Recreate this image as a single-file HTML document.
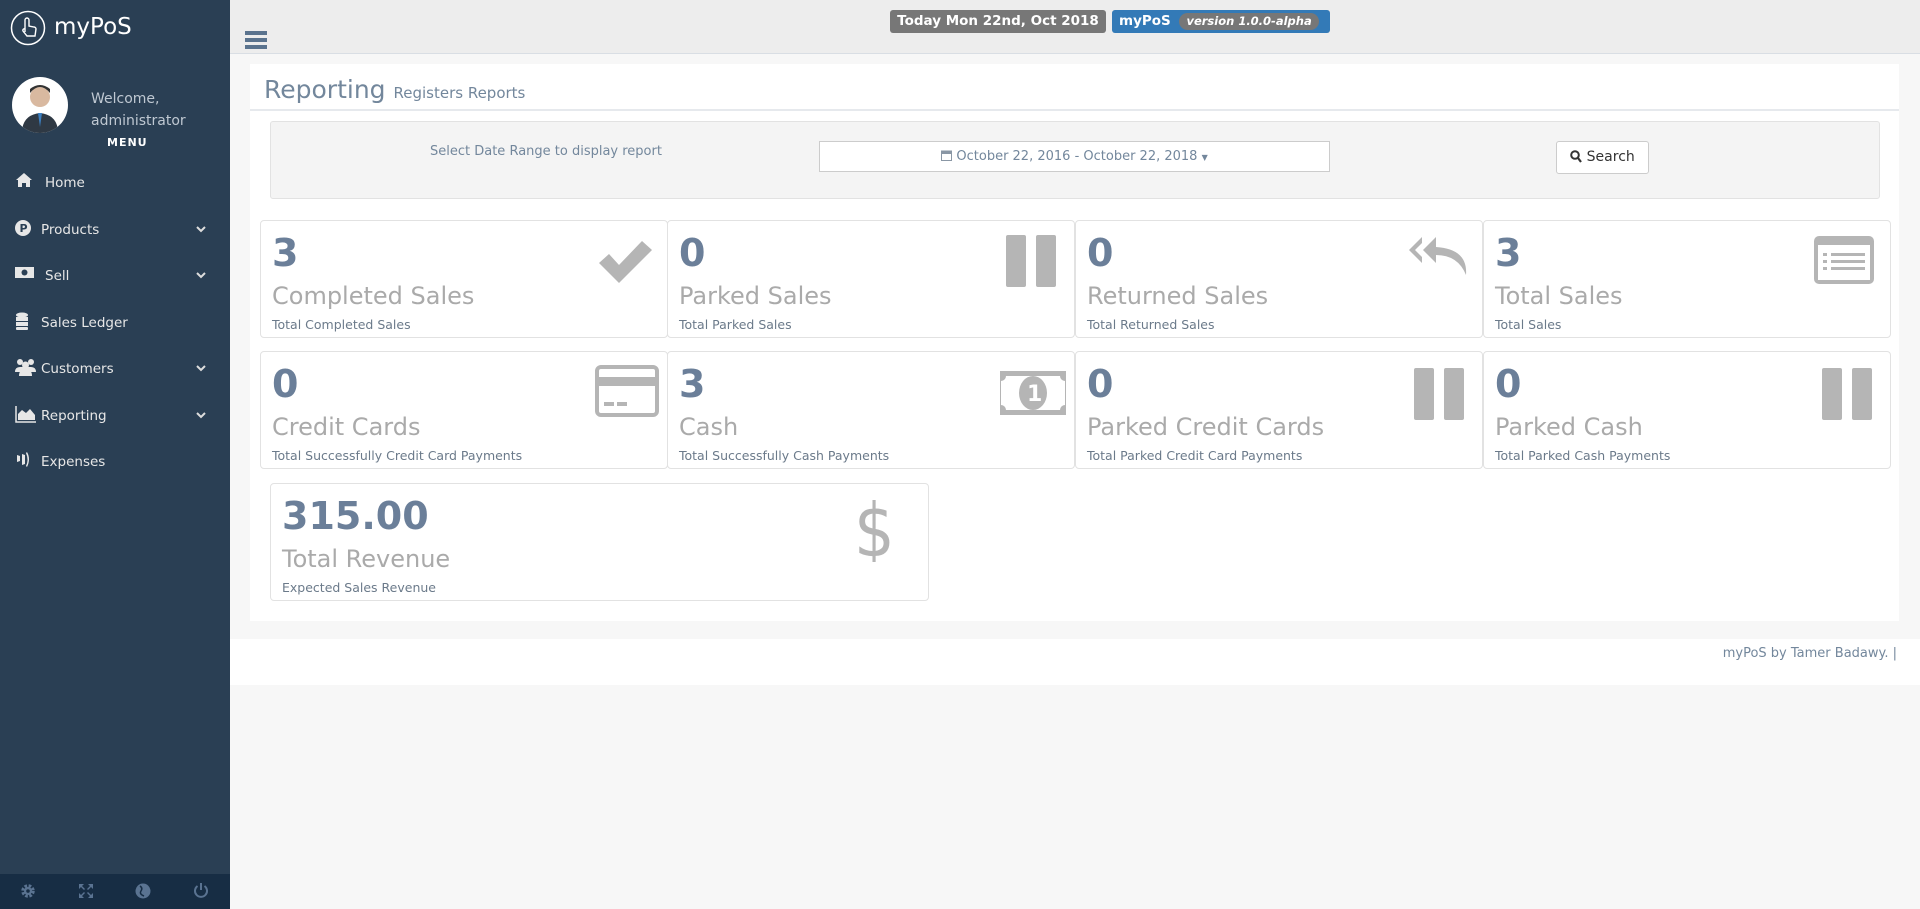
<!DOCTYPE html>
<html><head><meta charset="utf-8"><style>
*{box-sizing:border-box;margin:0;padding:0}
body{width:1920px;height:909px;background:#f7f7f7;font-family:"DejaVu Sans","Liberation Sans",sans-serif;position:relative;overflow:hidden}
.a{position:absolute}
#side{left:0;top:0;width:230px;height:909px;background:#2a3f54}
#sbot{left:0;top:874px;width:230px;height:35px;background:#172d44}
.nav{position:absolute;left:0;width:230px;color:#e7e7e7;font-size:13.5px}
.nav svg{position:absolute;left:15px;top:-3px}
.nav .t{position:absolute;left:41px;top:0}
.nav svg.c{left:196px;top:4px}
.card{position:absolute;background:#fff;border:1px solid #e2e2e2;border-radius:4px;width:408px;height:118px}
.card .n{position:absolute;left:11px;top:10px;font-size:38px;font-weight:bold;color:#6b7f99}
.card .l{position:absolute;left:11px;top:61px;font-size:24px;color:#aaa}
.card .s{position:absolute;left:11px;top:96px;font-size:12.5px;color:#6b7a8a}
.card svg{position:absolute;right:16px;top:14px}
</style></head><body>
<div class="a" id="side"></div>
<div class="a" id="sbot"></div>
<svg class="a" style="left:10px;top:10px" width="36" height="36" viewBox="0 0 36 36"><circle cx="18" cy="18" r="16.5" fill="none" stroke="#fff" stroke-width="1.5"/><path d="M15 22V10a2 2 0 014 0v6l5 1a2 2 0 012 2l-1 7h-8l-4-5a1.5 1.5 0 012-2z" fill="none" stroke="#fff" stroke-width="1.4"/></svg>
<div class="a" style="left:54px;top:14px;color:#fff;font-size:23px">myPoS</div>
<div class="a" style="left:12px;top:77px;width:56px;height:56px;border-radius:50%;background:#fff;overflow:hidden"><svg width="56" height="56" viewBox="0 0 56 56"><circle cx="28" cy="20" r="10" fill="#d9b9a0"/><path d="M18 16q10-12 20 0v-4q-10-8-20 0z" fill="#333"/><path d="M10 56q0-18 18-20q18 2 18 20z" fill="#2f3944"/><path d="M26 36l2 14 2-14z" fill="#3b7ec0"/></svg></div>
<div class="a" style="left:91px;top:88px;color:#bfc8d2;font-size:14px;line-height:22px">Welcome,<br>administrator</div>
<div class="a" style="left:107px;top:136px;color:#fff;font-size:11px;font-weight:bold;letter-spacing:1px">MENU</div>
<div class="nav" style="top:175px"><svg width="18" height="16" viewBox="0 0 18 16"><path d="M9 1L1 8h2v7h4v-4h4v4h4V8h2z" fill="#e7e7e7"/></svg><span class="t" style="left:45px">Home</span></div>
<div class="nav" style="top:222px"><svg width="18" height="18"><circle cx="8" cy="9" r="8" fill="#e7e7e7"/><text x="4.5" y="13" font-size="11" font-weight="bold" fill="#2a3f54">P</text></svg><span class="t">Products</span><svg class="c" width="10" height="8"><path d="M1 1l4 4 4-4" fill="none" stroke="#ddd" stroke-width="2"/></svg></div>
<div class="nav" style="top:268px"><svg width="20" height="16"><rect x="0" y="2" width="19" height="11" fill="#e7e7e7"/><circle cx="9.5" cy="7.5" r="3" fill="#2a3f54"/></svg><span class="t" style="left:45px">Sell</span><svg class="c" width="10" height="8"><path d="M1 1l4 4 4-4" fill="none" stroke="#ddd" stroke-width="2"/></svg></div>
<div class="nav" style="top:315px"><svg width="16" height="18"><ellipse cx="7" cy="3" rx="6" ry="2.5" fill="#e7e7e7"/><rect x="1" y="5" width="12" height="4" fill="#e7e7e7"/><rect x="1" y="10" width="12" height="4" fill="#e7e7e7"/><rect x="1" y="15" width="12" height="3" rx="1" fill="#e7e7e7"/></svg><span class="t">Sales Ledger</span></div>
<div class="nav" style="top:361px"><svg width="22" height="18"><circle cx="5" cy="4" r="3" fill="#e7e7e7"/><circle cx="16" cy="4" r="3" fill="#e7e7e7"/><circle cx="10.5" cy="7" r="3.5" fill="#e7e7e7"/><path d="M0 14q0-5 5-5h11q5 0 5 5zM4 18q0-7 6.5-7t6.5 7z" fill="#e7e7e7"/></svg><span class="t">Customers</span><svg class="c" width="10" height="8"><path d="M1 1l4 4 4-4" fill="none" stroke="#ddd" stroke-width="2"/></svg></div>
<div class="nav" style="top:408px"><svg width="22" height="18"><path d="M1 1v16h20" fill="none" stroke="#e7e7e7" stroke-width="1.5"/><path d="M3 15V9l4-4 4 3 4-4 5 6v5z" fill="#e7e7e7"/></svg><span class="t">Reporting</span><svg class="c" width="10" height="8"><path d="M1 1l4 4 4-4" fill="none" stroke="#ddd" stroke-width="2"/></svg></div>
<div class="nav" style="top:454px"><svg width="18" height="18"><path d="M2 4l3 1v5l-3 1zM7 3l3 1v9l-3 1zM12 1q4 7 0 15l-1-1q3-6 0-13z" fill="#e7e7e7"/></svg><span class="t">Expenses</span></div>
<svg class="a" style="left:20px;top:883px" width="16" height="16" viewBox="0 0 16 16"><circle cx="8" cy="8" r="5" fill="none" stroke="#5a7391" stroke-width="3.5" stroke-dasharray="2.5 1.5"/><circle cx="8" cy="8" r="4" fill="#5a7391"/><circle cx="8" cy="8" r="1.8" fill="#172d44"/></svg>
<svg class="a" style="left:78px;top:883px" width="16" height="16" viewBox="0 0 16 16" fill="#5a7391"><path d="M1 1h5L4 3l3 3-1 1-3-3-2 2zM15 1v5l-2-2-3 3-1-1 3-3-2-2zM1 15v-5l2 2 3-3 1 1-3 3 2 2zM15 15h-5l2-2-3-3 1-1 3 3 2-2z"/></svg>
<svg class="a" style="left:135px;top:883px" width="16" height="16"><circle cx="8" cy="8" r="7.5" fill="#5a7391"/><path d="M5 3q3 2 1 5t3 5" fill="none" stroke="#172d44" stroke-width="1.5"/></svg>
<svg class="a" style="left:193px;top:882px" width="16" height="17"><path d="M4.5 4a6 6 0 107 0" fill="none" stroke="#5a7391" stroke-width="2"/><path d="M8 1v7" stroke="#5a7391" stroke-width="2"/></svg>

<div class="a" style="left:230px;top:0;width:1690px;height:54px;background:#ededed;border-bottom:1px solid #d9dee4"></div>
<div class="a" style="left:245px;top:31px;width:22px;height:4px;background:#5a738e;box-shadow:0 7px 0 #5a738e,0 14px 0 #5a738e"></div>
<div class="a" style="left:890px;top:10px;width:216px;height:23px;background:#777;border-radius:3px;color:#fff;font-weight:bold;font-size:13.5px;text-align:center;line-height:23px">Today Mon 22nd, Oct 2018</div>
<div class="a" style="left:1112px;top:10px;width:218px;height:23px;background:#337ab7;border-radius:3px;color:#fff;font-weight:bold;font-size:13.5px;line-height:23px;padding-left:7px">myPoS <span style="display:inline-block;background:#777;border-radius:9px;font-style:italic;font-size:11.5px;padding:0 7px;line-height:17px;margin-left:4px">version 1.0.0-alpha</span></div>

<div class="a" style="left:250px;top:64px;width:1649px;height:557px;background:#fff"></div>
<div class="a" style="left:264px;top:75px;color:#73879c;font-size:25px">Reporting <span style="font-size:15px">Registers Reports</span></div>
<div class="a" style="left:250px;top:109px;width:1649px;height:2px;background:#e6e9ed"></div>
<div class="a" style="left:270px;top:121px;width:1610px;height:78px;background:#f4f4f4;border:1px solid #e2e2e2;border-radius:3px"></div>
<div class="a" style="left:430px;top:144px;color:#73879c;font-size:13px">Select Date Range to display report</div>
<div class="a" style="left:819px;top:141px;width:511px;height:31px;background:#fff;border:1px solid #ccc;color:#73879c;font-size:13px;text-align:center;line-height:29px"><svg width="11" height="12" style="vertical-align:-1px"><rect x="0.5" y="2" width="10" height="9.5" fill="none" stroke="#8a97a5"/><rect x="0.5" y="2" width="10" height="3" fill="#8a97a5"/></svg> October 22, 2016 - October 22, 2018 <span style="font-size:8px">&#9660;</span></div>
<div class="a" style="left:1556px;top:141px;width:93px;height:33px;background:#fff;border:1px solid #ccc;border-radius:3px;color:#333;font-size:14px;text-align:center;line-height:31px"><svg width="12" height="13" style="vertical-align:-2px"><circle cx="5" cy="5" r="3.8" fill="none" stroke="#333" stroke-width="2"/><path d="M8 8l3 4" stroke="#333" stroke-width="2.2"/></svg> Search</div>

<div class="card" style="left:260px;top:220px"><div class="n">3</div><div class="l">Completed Sales</div><div class="s">Total Completed Sales</div><svg width="56" height="50" style="top:16px;right:14px"><path d="M2 26l10-9 10 11L45 4l10 9-33 33z" fill="#b5b5b5"/></svg></div>
<div class="card" style="left:667px;top:220px"><div class="n">0</div><div class="l">Parked Sales</div><div class="s">Total Parked Sales</div><svg width="52" height="52"><rect x="0" y="0" width="20" height="52" rx="2" fill="#b5b5b5"/><rect x="30" y="0" width="20" height="52" rx="2" fill="#b5b5b5"/></svg></div>
<div class="card" style="left:1075px;top:220px"><div class="n">0</div><div class="l">Returned Sales</div><div class="s">Total Returned Sales</div><svg width="62" height="56" style="top:12px;right:12px"><path d="M14 4L1 17l13 13v-6L7 17l7-7zM28 4L15 17l13 13v-8q22 0 30 20 2-26-30-28z" fill="#b5b5b5"/></svg></div>
<div class="card" style="left:1483px;top:220px"><div class="n">3</div><div class="l">Total Sales</div><div class="s">Total Sales</div><svg width="60" height="48" style="top:15px"><rect x="0" y="0" width="60" height="48" rx="5" fill="#b5b5b5"/><rect x="4" y="9" width="52" height="35" fill="#fff"/><g fill="#b5b5b5"><rect x="9" y="17" width="4" height="3"/><rect x="9" y="24" width="4" height="3"/><rect x="9" y="31" width="4" height="3"/><rect x="17" y="17" width="34" height="3"/><rect x="17" y="24" width="34" height="3"/><rect x="17" y="31" width="34" height="3"/></g></svg></div>

<div class="card" style="left:260px;top:351px"><div class="n">0</div><div class="l">Credit Cards</div><div class="s">Total Successfully Credit Card Payments</div><svg width="64" height="54" style="top:13px;right:8px"><rect x="2" y="2" width="60" height="48" rx="4" fill="none" stroke="#b5b5b5" stroke-width="4"/><rect x="2" y="12" width="60" height="9" fill="#b5b5b5"/><rect x="9" y="37" width="10" height="4" fill="#b5b5b5"/><rect x="22" y="37" width="10" height="4" fill="#b5b5b5"/></svg></div>
<div class="card" style="left:667px;top:351px"><div class="n">3</div><div class="l">Cash</div><div class="s">Total Successfully Cash Payments</div><svg width="66" height="44" style="top:19px;right:8px"><rect x="0" y="0" width="66" height="44" fill="#b5b5b5"/><path d="M6 5h54a5 5 0 005 5v24a5 5 0 00-5 5H6a5 5 0 00-5-5V10a5 5 0 005-5z" fill="#fff"/><ellipse cx="33" cy="22" rx="14" ry="17" fill="#b5b5b5"/><text x="27" y="30" font-size="22" font-weight="bold" fill="#fff" font-family="DejaVu Sans">1</text></svg></div>
<div class="card" style="left:1075px;top:351px"><div class="n">0</div><div class="l">Parked Credit Cards</div><div class="s">Total Parked Credit Card Payments</div><svg width="52" height="52" style="top:16px"><rect x="0" y="0" width="20" height="52" rx="2" fill="#b5b5b5"/><rect x="30" y="0" width="20" height="52" rx="2" fill="#b5b5b5"/></svg></div>
<div class="card" style="left:1483px;top:351px"><div class="n">0</div><div class="l">Parked Cash</div><div class="s">Total Parked Cash Payments</div><svg width="52" height="52" style="top:16px"><rect x="0" y="0" width="20" height="52" rx="2" fill="#b5b5b5"/><rect x="30" y="0" width="20" height="52" rx="2" fill="#b5b5b5"/></svg></div>

<div class="card" style="left:270px;top:483px;width:659px"><div class="n">315.00</div><div class="l">Total Revenue</div><div class="s">Expected Sales Revenue</div><svg width="40" height="70" style="top:8px;right:36px"><text x="2" y="56" font-size="64" fill="#b5b5b5" font-family="DejaVu Sans" transform="scale(1,1.15)">$</text></svg></div>

<div class="a" style="left:230px;top:639px;width:1690px;height:46px;background:#fff"></div>
<div class="a" style="right:23px;top:646px;color:#73879c;font-size:13px">myPoS by Tamer Badawy. |</div>
</body></html>
